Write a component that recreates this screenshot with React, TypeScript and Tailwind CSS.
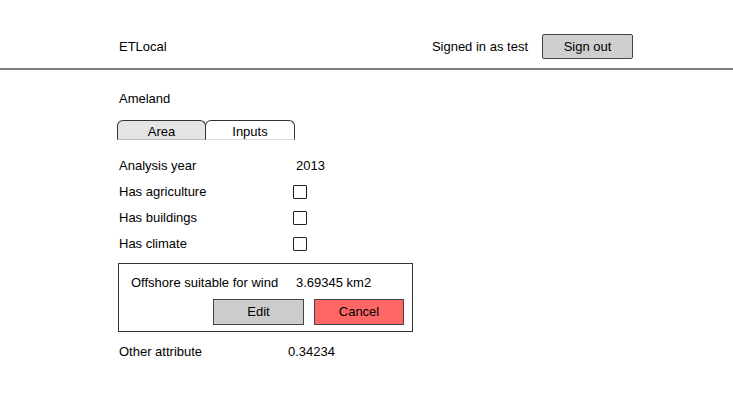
export default function App() {
  const font = { fontFamily: '"Comic Sans MS", "Liberation Sans", Arial, sans-serif' };
  return (
    <div className="w-[733px] h-[413px] bg-white text-black text-[13px] leading-4 overflow-hidden" style={font}>
      <header className="flex items-center justify-between pt-[34px] pb-[9px] pl-[119px] pr-[100px] border-b-2 border-[#808080]">
        <span>ETLocal</span>
        <div className="flex items-center gap-[14px]">
          <span>Signed in as test</span>
          <button className="w-[91px] h-[25px] bg-[#cfcfcf] border border-[#444] rounded-[2px] flex items-center justify-center">
            Sign out
          </button>
        </div>
      </header>
      <main className="pl-[119px] pt-[21px]">
        <div className="h-4">Ameland</div>
        <div className="flex mt-[13px] -ml-[2px]">
          <div className="w-[89px] h-[20px] pt-[3px] bg-[#e4e4e4] border border-[#333] border-b-[#bbb] rounded-t-[6px] flex items-center justify-center">
            Area
          </div>
          <div className="w-[90px] h-[20px] pt-[3px] -ml-px bg-white border border-[#333] border-b-[#ddd] rounded-t-[6px] flex items-center justify-center">
            Inputs
          </div>
        </div>
        <div className="mt-[13px] flex flex-col">
          <div className="h-[26px] flex items-center">
            <span className="w-[174px]">Analysis year</span>
            <span className="pl-[3px]">2013</span>
          </div>
          {['Has agriculture', 'Has buildings', 'Has climate'].map((l) => (
            <div key={l} className="h-[26px] flex items-center">
              <span className="w-[174px]">{l}</span>
              <span className="w-[14px] h-[14px] border border-[#222] rounded-[1px] bg-white" />
            </div>
          ))}
        </div>
        <div className="mt-[6px] -ml-px w-[295px] h-[69px] border-[1.5px] border-[#333] pl-[12px] pr-[8px] pt-[11px] flex flex-col">
          <div className="flex items-center h-4">
            <span className="w-[165px]">Offshore suitable for wind</span>
            <span>3.69345 km2</span>
          </div>
          <div className="flex justify-end gap-[10px] mt-[8px]">
            <button className="w-[91px] h-[26px] bg-[#cccccc] border border-[#444] flex items-center justify-center">
              Edit
            </button>
            <button className="w-[90px] h-[26px] bg-[#ff6666] border border-[#444] flex items-center justify-center">
              Cancel
            </button>
          </div>
        </div>
        <div className="mt-[12px] flex items-center h-4">
          <span className="w-[169px]">Other attribute</span>
          <span>0.34234</span>
        </div>
      </main>
    </div>
  );
}
